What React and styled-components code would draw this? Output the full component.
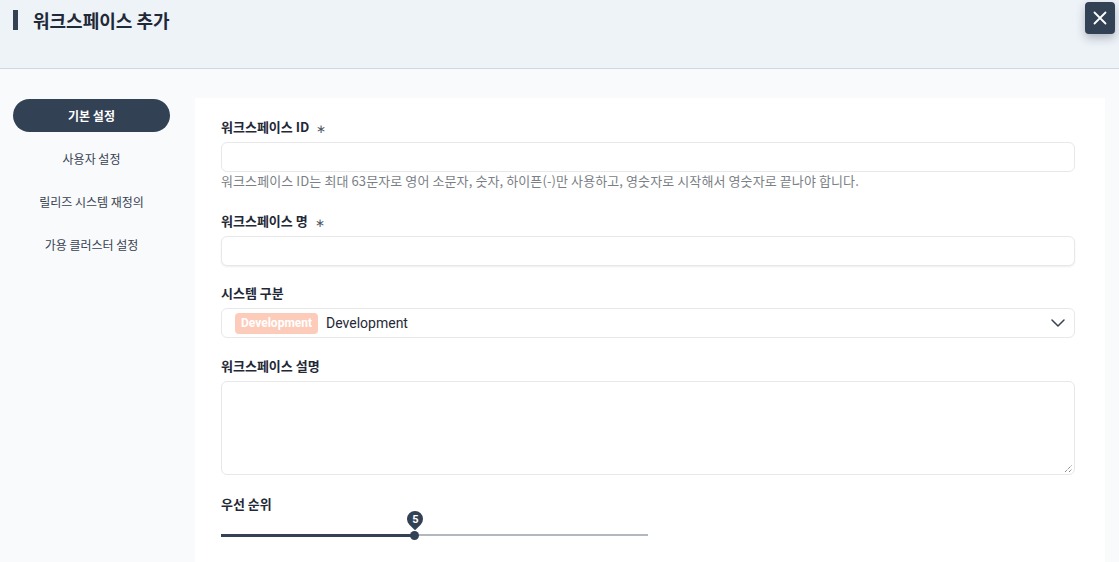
import React from "react";
import styled, { createGlobalStyle } from "styled-components";

const Global = createGlobalStyle`
  html, body { margin: 0; padding: 0; }
  body {
    font-family: "Noto Sans CJK KR", "Noto Sans", sans-serif;
    background: #f8fafc;
    color: #1f2937;
  }
  * { box-sizing: border-box; }
`;

const Page = styled.div`
  width: 1119px;
  height: 562px;
  overflow: hidden;
  background: #f8fafc;
  display: flex;
  flex-direction: column;
`;

const Header = styled.header`
  position: relative;
  height: 69px;
  background: #eef3f8;
  border-bottom: 1px solid #cfd8e3;
  padding: 9px 0 0 13px;
  flex-shrink: 0;
`;

const Title = styled.h1`
  margin: 0;
  display: flex;
  align-items: center;
  gap: 15px;
  font-size: 18px;
  font-weight: 700;
  color: #1f2937;
  line-height: 22px;
  &::before {
    content: "";
    width: 5px;
    height: 20px;
    background: #334155;
  }
`;

const CloseButton = styled.button`
  position: absolute;
  top: 2px;
  right: 4px;
  width: 30px;
  height: 32px;
  border: none;
  border-radius: 4px;
  background: #334155;
  color: #fff;
  display: flex;
  align-items: center;
  justify-content: center;
  padding: 0;
  box-shadow: 0 4px 10px rgba(30, 41, 59, 0.3);
  cursor: pointer;
`;

const Body = styled.div`
  flex: 1;
  display: flex;
  padding: 29px 14px 0 13px;
  gap: 25px;
  min-height: 0;
`;

const Sidebar = styled.nav`
  width: 157px;
  flex-shrink: 0;
  display: flex;
  flex-direction: column;
  gap: 10px;
  padding-top: 1px;
`;

const NavItem = styled.div`
  height: 33px;
  border-radius: 999px;
  display: flex;
  align-items: center;
  justify-content: center;
  font-size: 12px;
  font-weight: ${(p) => (p.$active ? 700 : 400)};
  color: ${(p) => (p.$active ? "#ffffff" : "#374151")};
  background: ${(p) => (p.$active ? "#334155" : "transparent")};
`;

const Panel = styled.main`
  flex: 1;
  background: #ffffff;
  padding: 19px 30px 0 26px;
  display: flex;
  flex-direction: column;
`;

const Field = styled.div`
  display: flex;
  flex-direction: column;
  margin-bottom: ${(p) => p.$mb || 0}px;
`;

const Label = styled.label`
  font-size: 13px;
  font-weight: 700;
  color: #1f2937;
  line-height: 20px;
  margin-bottom: ${(p) => (p.$flat ? 0 : 5)}px;
  display: flex;
  align-items: center;
  gap: 7px;
`;

const Req = styled.span`
  font-size: 12px;
  color: #4b5563;
  font-weight: 400;
  position: relative;
  top: 1px;
`;

const Input = styled.div`
  height: 30px;
  border: 1px solid #e7e8ea;
  border-radius: 6px;
  background: #fff;
  box-shadow: ${(p) => (p.$inset ? "0 1px 2px rgba(0,0,0,0.07)" : "none")};
`;

const Help = styled.div`
  font-size: 13px;
  color: #7b7f86;
  line-height: 18px;
  letter-spacing: 0.1px;
`;

const Select = styled.div`
  height: 30px;
  border: 1px solid #e7e8ea;
  border-radius: 6px;
  background: #fff;
  display: flex;
  align-items: center;
  padding: 0 8px 0 13px;
  gap: 8px;
  font-family: "Roboto", "Noto Sans", sans-serif;
  font-size: 14px;
  color: #1f2937;
`;

const Badge = styled.span`
  background: #fdcbb9;
  color: #ffffff;
  font-family: "Roboto", "Noto Sans", sans-serif;
  font-weight: 700;
  font-size: 12px;
  height: 21px;
  line-height: 21px;
  padding: 0 6px;
  border-radius: 4px;
`;

const Chevron = styled.span`
  margin-left: auto;
  display: flex;
  color: #374151;
`;

const TextArea = styled.div`
  height: 94px;
  border: 1px solid #e7e8ea;
  border-radius: 6px;
  background: #fff;
  position: relative;
`;

const Grip = styled.svg`
  position: absolute;
  right: 1px;
  bottom: 1px;
`;

const SliderWrap = styled.div`
  width: 427px;
  height: 30px;
  position: relative;
`;

const Track = styled.div`
  position: absolute;
  left: 0;
  right: 0;
  top: 20px;
  height: 2px;
  background: #b3b7bf;
`;

const Fill = styled.div`
  position: absolute;
  left: 0;
  top: 19.5px;
  height: 3px;
  background: #334155;
`;

const Thumb = styled.div`
  position: absolute;
  top: 16.5px;
  width: 9px;
  height: 9px;
  margin-left: -4.5px;
  border-radius: 50%;
  background: #334155;
`;

const Pin = styled.div`
  position: absolute;
  top: -3px;
  width: 16px;
  height: 16px;
  margin-left: -8px;
  border-radius: 50% 50% 50% 0;
  transform: rotate(-45deg);
  background: #334155;
  display: flex;
  align-items: center;
  justify-content: center;
  & > span {
    transform: rotate(45deg);
    color: #fff;
    font-family: "Roboto", sans-serif;
    font-weight: 700;
    font-size: 11px;
    line-height: 1;
  }
`;

const navItems = ["기본 설정", "사용자 설정", "릴리즈 시스템 재정의", "가용 클러스터 설정"];

export default function App() {
  const pct = 45.4;
  return (
    <Page>
      <Global />
      <Header>
        <Title>워크스페이스 추가</Title>
        <CloseButton aria-label="close">
          <svg width="16" height="16" viewBox="0 0 16 16" fill="none" stroke="#fff" strokeWidth="1.8" strokeLinecap="round">
            <path d="M2.5 2.5 L13.5 13.5 M13.5 2.5 L2.5 13.5" />
          </svg>
        </CloseButton>
      </Header>
      <Body>
        <Sidebar>
          {navItems.map((n, i) => (
            <NavItem key={n} $active={i === 0}>{n}</NavItem>
          ))}
        </Sidebar>
        <Panel>
          <Field $mb={21}>
            <Label>워크스페이스 ID <Req>∗</Req></Label>
            <Input />
            <Help>워크스페이스 ID는 최대 63문자로 영어 소문자, 숫자, 하이픈(-)만 사용하고, 영숫자로 시작해서 영숫자로 끝나야 합니다.</Help>
          </Field>
          <Field $mb={17}>
            <Label>워크스페이스 명 <Req>∗</Req></Label>
            <Input $inset />
          </Field>
          <Field $mb={18}>
            <Label>시스템 구분</Label>
            <Select>
              <Badge>Development</Badge>
              <span>Development</span>
              <Chevron>
                <svg width="16" height="16" viewBox="0 0 16 16" fill="none" stroke="currentColor" strokeWidth="1.5" strokeLinecap="round" strokeLinejoin="round">
                  <path d="M2 5 L8 11 L14 5" />
                </svg>
              </Chevron>
            </Select>
          </Field>
          <Field $mb={19}>
            <Label>워크스페이스 설명</Label>
            <TextArea>
              <Grip width="9" height="9" viewBox="0 0 9 9" stroke="#555" strokeWidth="1" strokeDasharray="1 1">
                <path d="M1 8 L8 1 M5 8 L8 5" />
              </Grip>
            </TextArea>
          </Field>
          <Field>
            <Label $flat>우선 순위</Label>
            <SliderWrap>
              <Track />
              <Fill style={{ width: `${pct}%` }} />
              <Thumb style={{ left: `${pct}%` }} />
              <Pin style={{ left: `${pct}%` }}><span>5</span></Pin>
            </SliderWrap>
          </Field>
        </Panel>
      </Body>
    </Page>
  );
}
